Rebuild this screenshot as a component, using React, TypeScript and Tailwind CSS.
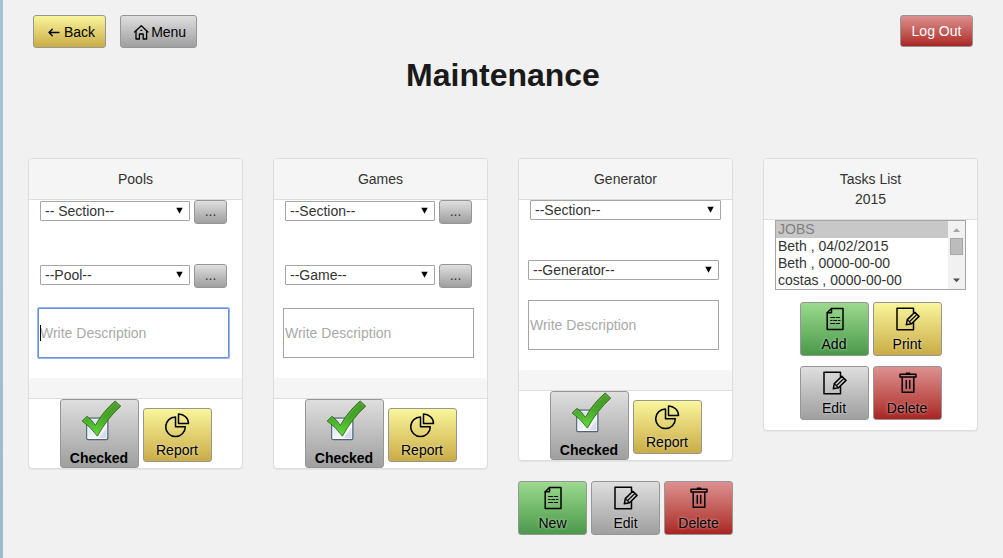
import { useId, type ReactNode } from "react";

const tones = {
  yellow: "bg-linear-to-b from-[#faf59b] to-[#c9ac45] text-black",
  grey: "bg-linear-to-b from-[#dfdfdf] to-[#9f9f9f] text-black",
  green: "bg-linear-to-b from-[#9bda8f] to-[#4a994a] text-black",
  red: "bg-linear-to-b from-[#dc9090] to-[#a92323] text-black",
};

type Tone = keyof typeof tones;

const line = {
  fill: "none",
  stroke: "currentColor",
  strokeWidth: 1.5,
  strokeLinejoin: "round" as const,
  strokeLinecap: "round" as const,
};

function DocIcon() {
  return (
    <svg className="h-[25px] w-[25px]" viewBox="0 0 25 25" {...line} aria-hidden="true">
      <path d="M9.5 1.5H21V22.5H5.2V5.8Z" />
      <path d="M9.5 1.5V5.8H5.2" />
      <path d="M8.7 10.5h3.8M14.2 10.5h3.3M8.7 13.5h1.3M11.8 13.5h2.8M16.4 13.5h1.6M8.7 16.5h3.8M14.2 16.5h3.3" strokeWidth="1.2" />
    </svg>
  );
}

function EditIcon() {
  return (
    <svg className="h-[25px] w-[25px]" viewBox="0 0 25 25" {...line} aria-hidden="true">
      <path d="M18.5 5.5V1.3H2V22.7H18.5V15.5" />
      <path d="M11.3 17.8L12.3 12.6L19.8 5.3L24 9.4L16.5 16.8Z" />
      <path d="M12.5 12.8L16.3 16.6M14.4 14.7L21.9 7.4" strokeWidth="1.2" />
    </svg>
  );
}

function TrashIcon() {
  return (
    <svg className="h-[25px] w-[25px]" viewBox="0 0 25 25" {...line} aria-hidden="true">
      <path d="M5 3.3H21V6H5Z" />
      <path d="M11.3 2.3H14.7" />
      <path d="M7.2 6.3V21.3H18.8V6.3" />
      <path d="M11.3 9.5V17.3M14.7 9.5V17.3" />
    </svg>
  );
}

function PieIcon() {
  return (
    <svg className="h-[25px] w-[25px]" viewBox="0 0 25 25" {...line} aria-hidden="true">
      <path d="M10.5 4A9.8 9.8 0 1 0 20.3 13.8H10.5Z" />
      <path d="M13.5 1A10 9.5 0 0 1 23.5 10.5H13.5Z" />
    </svg>
  );
}

function ArrowIcon() {
  return (
    <svg className="h-5 w-5" viewBox="0 0 20 20" {...line} strokeWidth={1.3} aria-hidden="true">
      <path d="M5.2 10.5H15M8.3 7.2L5 10.5L8.3 13.8" />
    </svg>
  );
}

function HomeIcon() {
  return (
    <svg className="h-5 w-5" viewBox="0 0 20 20" {...line} strokeWidth={1.3} aria-hidden="true">
      <path d="M3.6 10L10.3 3.7L17 10" />
      <path d="M5 9V17H8.4V12H12.2V17H15.6V9M9.8 8.3H10.8" />
    </svg>
  );
}

function CheckIcon() {
  const id = useId();
  return (
    <svg className="h-[51px] w-[49px]" viewBox="0 0 49 51" aria-hidden="true">
      <defs>
        <linearGradient id={`${id}box`} x1="0" y1="0" x2="1" y2="1">
          <stop offset="0" stopColor="#c3d3e3" />
          <stop offset="0.6" stopColor="#f4f8fc" />
          <stop offset="1" stopColor="#dfe8f2" />
        </linearGradient>
        <linearGradient id={`${id}tick`} x1="0" y1="0" x2="0" y2="1">
          <stop offset="0" stopColor="#4f9a2c" />
          <stop offset="0.45" stopColor="#43a526" />
          <stop offset="1" stopColor="#62dc3a" />
        </linearGradient>
      </defs>
      <rect x="11.2" y="18.8" width="22" height="22.4" rx="1.5" fill={`url(#${id}box)`} stroke="#4f6379" strokeWidth="1.3" />
      <rect x="12.5" y="20.1" width="19.4" height="19.8" fill="none" stroke="#fff" strokeWidth="0.9" opacity="0.8" />
      <path d="M24 39.5L32 29V39.8H24Z" fill="#8294a8" opacity="0.2" />
      <path
        d="M6.4 21.9L11.6 17Q16.5 20.5 20.2 26.4Q28 12 40.8 1L46.6 6.4Q32.5 19 22.3 37.6Q15.5 28 6.4 21.9Z"
        fill={`url(#${id}tick)`}
        stroke="#2c6418"
        strokeWidth="0.9"
        strokeLinejoin="round"
      />
      <path d="M8.2 21.8L11.7 18.5Q16.5 22 20.3 28.4Q28.5 13.6 40.8 2.6L44.8 6.3" fill="none" stroke="#7cc462" strokeWidth="0.7" opacity="0.6" />
    </svg>
  );
}

function ActionButton({ tone, icon, children }: { tone: Tone; icon: ReactNode; children: ReactNode }) {
  return (
    <button
      type="button"
      className={`flex h-[54px] w-[69px] flex-col items-center rounded-[3px] border border-[#969696] pt-1 leading-5 ${tones[tone]}`}
    >
      {icon}
      <span className="mt-0.5 [text-shadow:0_0_3px_#ffffffb0]">{children}</span>
    </button>
  );
}

function CheckedButton() {
  return (
    <button
      type="button"
      className={`flex h-[69px] w-[79px] flex-col items-center rounded-[3px] border border-[#969696] font-bold ${tones.grey}`}
    >
      <CheckIcon />
      <span className="leading-[18px]">Checked</span>
    </button>
  );
}

function NavButton({ tone, icon, children }: { tone: Tone; icon: ReactNode; children: ReactNode }) {
  return (
    <button
      type="button"
      className={`flex h-[33px] items-center rounded-[3px] border border-[#969696] px-2.5 leading-5 ${tones[tone]}`}
    >
      {icon}
      {children}
    </button>
  );
}

function Dropdown({ label, text }: { label: string; text: string }) {
  return (
    <div className="relative min-w-0 flex-1">
      <select
        aria-label={label}
        className="block h-5 w-full appearance-none rounded-[1px] border border-[#a5a5a5] bg-white pr-5 pl-1 leading-[18px] text-[#333]"
      >
        <option>{text}</option>
      </select>
      <svg className="pointer-events-none absolute top-1.5 right-[7px] h-[7px] w-[7px]" viewBox="0 0 7 7" aria-hidden="true">
        <path d="M0.3 0.8H6.7L3.5 6.8Z" fill="#000" />
      </svg>
    </div>
  );
}

function PickerRow({ label, text }: { label: string; text: string }) {
  return (
    <div className="flex h-6 gap-1 pr-[15px] pl-[11px]">
      <div className="flex flex-1 pt-px">
        <Dropdown label={label} text={text} />
      </div>
      <button
        type="button"
        aria-label={`More ${label}`}
        className="h-6 w-[33px] rounded-[3px] border border-[#969696] bg-linear-to-b from-[#dfdfdf] to-[#9f9f9f] pb-0.5 leading-5 text-[#333]"
      >
        ...
      </button>
    </div>
  );
}

function Description({ label, active = false }: { label: string; active?: boolean }) {
  return (
    <div className="relative mt-5 mr-[13px] ml-[9px]">
      <input
        type="text"
        aria-label={label}
        placeholder="Write Description"
        className={`block h-[50px] w-full border bg-white px-px text-[#333] outline-none placeholder:text-[#a9a9a9] ${
          active ? "rounded-[1px] border-[#6590dc] ring-1 ring-[#93b8f0]" : "border-[#a5a5a5]"
        }`}
      />
      {active && <span className="absolute top-[17px] left-0.5 h-4 w-px bg-black" />}
    </div>
  );
}

function Card({ title, children }: { title: ReactNode; children: ReactNode }) {
  return (
    <section className="rounded-sm border border-[#ddd] bg-white shadow-[0_1px_1px_#0000000d]">
      <h2 className="rounded-t-[3px] border-b border-[#ddd] bg-[#f5f5f5] py-2.5 text-center leading-5">{title}</h2>
      {children}
    </section>
  );
}

function CardActions() {
  return (
    <>
      <div className="mt-5 h-[21px] rounded-t-[3px] border-b border-[#ddd] bg-[#f5f5f5]" />
      <div className="flex items-end justify-center gap-1">
        <CheckedButton />
        <div className="pb-1.5">
          <ActionButton tone="yellow" icon={<PieIcon />}>
            Report
          </ActionButton>
        </div>
      </div>
    </>
  );
}

function TaskList() {
  const tasks = ["Beth , 04/02/2015", "Beth , 0000-00-00", "costas , 0000-00-00"];
  return (
    <div className="mx-[11px] flex h-[70px] border border-[#a5a5a5] bg-white">
      <select
        size={4}
        aria-label="Tasks"
        className="h-[68px] min-w-0 flex-1 appearance-none overflow-hidden bg-white text-[#333] outline-none [scrollbar-width:none]"
      >
        <option disabled className="h-[17px] bg-[#c8c8c8] px-0.5 py-0 leading-[17px] text-[#808080]">
          JOBS
        </option>
        {tasks.map((task) => (
          <option key={task} className="h-[17px] px-0.5 py-0 leading-[17px]">
            {task}
          </option>
        ))}
      </select>
      <div className="flex w-[17px] flex-col items-center bg-[#f1f1f1]">
        <svg className="h-[17px] w-[17px]" viewBox="0 0 17 17" aria-hidden="true">
          <path d="M5 11L8.5 7.3L12 11Z" fill="#a3a3a3" />
        </svg>
        <div className="h-[17px] w-[13px] border border-[#a8a8a8] bg-[#bcbcbc]" />
        <svg className="mt-auto h-[17px] w-[17px]" viewBox="0 0 17 17" aria-hidden="true">
          <path d="M5 6.5L8.5 10.2L12 6.5Z" fill="#505050" />
        </svg>
      </div>
    </div>
  );
}

export default function App() {
  return (
    <div className="flex min-h-screen bg-[#f1f1f1] font-['Liberation_Sans',Arial,sans-serif] text-sm text-[#333]">
      <div className="w-[3px] shrink-0 bg-linear-to-b from-[#a3c3d3] via-[#a9bfd0] to-[#9db9cb]" />
      <main className="min-w-0 flex-1 px-[25px] pt-[15px] pb-5">
        <header className="flex items-start justify-between px-[5px]">
          <nav className="flex gap-3.5">
            <NavButton tone="yellow" icon={<ArrowIcon />}>
              Back
            </NavButton>
            <NavButton tone="grey" icon={<HomeIcon />}>
              Menu
            </NavButton>
          </nav>
          <button
            type="button"
            className="min-w-[73px] rounded-[3px] border border-[#969696] bg-linear-to-b from-[#dc9090] to-[#a92323] py-[5px] text-center leading-5 text-white"
          >
            Log Out
          </button>
        </header>
        <h1 className="mt-[7px] text-center text-[32px] leading-10 font-bold text-[#1a1a1a]">Maintenance</h1>

        <div className="mt-[63px] grid grid-cols-4 items-start gap-[30px]">
          <Card title="Pools">
            <PickerRow label="Pool section" text="-- Section--" />
            <div className="pt-10">
              <PickerRow label="Pool" text="--Pool--" />
            </div>
            <Description label="Pool description" active />
            <CardActions />
          </Card>

          <Card title="Games">
            <PickerRow label="Game section" text="--Section--" />
            <div className="pt-10">
              <PickerRow label="Game" text="--Game--" />
            </div>
            <Description label="Game description" />
            <CardActions />
          </Card>

          <div>
            <Card title="Generator">
              <div className="flex px-[11px]">
                <Dropdown label="Generator section" text="--Section--" />
              </div>
              <div className="flex pt-10 pr-[13px] pl-[9px]">
                <Dropdown label="Generator" text="--Generator--" />
              </div>
              <Description label="Generator description" />
              <CardActions />
            </Card>
            <div className="mt-5 flex justify-center gap-1">
              <ActionButton tone="green" icon={<DocIcon />}>
                New
              </ActionButton>
              <ActionButton tone="grey" icon={<EditIcon />}>
                Edit
              </ActionButton>
              <ActionButton tone="red" icon={<TrashIcon />}>
                Delete
              </ActionButton>
            </div>
          </div>

          <Card
            title={
              <>
                Tasks List
                <br />
                2015
              </>
            }
          >
            <TaskList />
            <div className="grid grid-cols-[69px_69px] justify-center gap-x-1 gap-y-2.5 pt-3 pb-2.5">
              <ActionButton tone="green" icon={<DocIcon />}>
                Add
              </ActionButton>
              <ActionButton tone="yellow" icon={<EditIcon />}>
                Print
              </ActionButton>
              <ActionButton tone="grey" icon={<EditIcon />}>
                Edit
              </ActionButton>
              <ActionButton tone="red" icon={<TrashIcon />}>
                Delete
              </ActionButton>
            </div>
          </Card>
        </div>
      </main>
    </div>
  );
}
